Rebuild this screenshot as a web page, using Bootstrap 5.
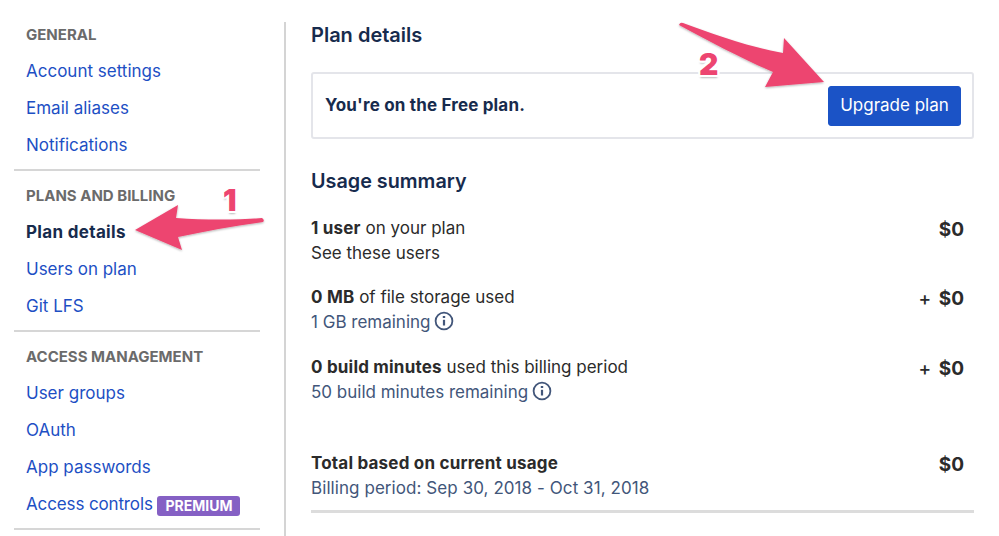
<!DOCTYPE html>
<html lang="en">
<head>
<meta charset="utf-8">
<title>Plan details</title>
<link href="https://cdn.jsdelivr.net/npm/bootstrap@5.3.0/dist/css/bootstrap.min.css" rel="stylesheet">
<style>
html,body{height:536px;overflow:hidden}
body{font-family:Inter,"Liberation Sans",sans-serif;font-size:17px;color:#172b4d;background:#fff;position:relative}
.shell{padding-top:22px}
.sidebar{width:286px;flex:none;height:514px;border-right:2px solid #d4d4d4;padding-left:14px}
.sidegroup{width:246px;border-bottom:2px solid #d6d6d6;padding:0 0 5px 12px;margin-bottom:13px}
.sidehead{font-size:15px;font-weight:700;color:#6b6b6b;line-height:24px;margin:1px 0 6px}
.sidelink{display:block;line-height:37px;height:37px;color:#1d4fc4;text-decoration:none;font-size:17px}
.sidelink.current{color:#172b4d;font-weight:700;letter-spacing:.33px}
.tightlink{letter-spacing:-.13px}
.tagpremium{background:#8560c4;color:#fff;font-size:14px;font-weight:700;border-radius:3px;padding:1px 8px;line-height:18px;display:inline-block;margin-left:0;vertical-align:-1px;letter-spacing:0}
.mainpane{padding:0 25px;flex:1;min-width:0}
.pagetitle{font-size:20px;font-weight:600;line-height:26px;margin:0 0 24px;color:#172b4d}
.planbox{height:67px;border:2px solid #e4e5ea;border-radius:3px;padding:0 11px 0 12px;font-weight:700;margin-bottom:29px;font-size:17px;letter-spacing:.17px}
.upbtn{background:#1b53c6;border:1px solid #1b53c6;color:#fff;font-size:17px;border-radius:3px;height:40px;width:133px;padding:0;letter-spacing:0}
.subtitle{font-size:19.8px;font-weight:600;line-height:26px;margin:0 0 21.8px;color:#172b4d}
.usage{color:#2b2b2b;line-height:25px;padding-right:10px;margin-bottom:19.5px}
.usage b{font-weight:700;letter-spacing:.2px}
.muted{color:#42567a}
.widetext{letter-spacing:.07px}
.price{font-size:19px;font-weight:700;color:#2b2b2b;padding-top:1px}
.price span{font-weight:500;margin-right:3px}
.totalrow{margin-top:46px;border-bottom:3px solid #dcdcdc;padding-bottom:9px}
.notes{position:absolute;left:0;top:0;pointer-events:none}
.num{position:absolute;font-size:30px;font-weight:900;color:#ed4570;line-height:30px;text-shadow:-2px 0 #fff,2px 0 #fff,0 -2px #fff,0 2px #fff,-2px -2px #fff,2px -2px #fff,-2px 2px #fff,2px 2px #fff,0 3px 2px #bbb}
.numone{left:223px;top:185px}
.numtwo{left:699px;top:49px}
.infoicon{vertical-align:-3px;margin-left:-1px}
</style>
</head>
<body>
<div class="shell d-flex">
  <nav class="sidebar">
    <div class="sidegroup">
      <div class="sidehead">GENERAL</div>
      <a class="sidelink" href="#">Account settings</a>
      <a class="sidelink" href="#">Email aliases</a>
      <a class="sidelink" href="#">Notifications</a>
    </div>
    <div class="sidegroup">
      <div class="sidehead">PLANS AND BILLING</div>
      <a class="sidelink current" href="#">Plan details</a>
      <a class="sidelink" href="#">Users on plan</a>
      <a class="sidelink" href="#">Git LFS</a>
    </div>
    <div class="sidegroup">
      <div class="sidehead">ACCESS MANAGEMENT</div>
      <a class="sidelink" href="#">User groups</a>
      <a class="sidelink" href="#">OAuth</a>
      <a class="sidelink" href="#">App passwords</a>
      <a class="sidelink tightlink" href="#">Access controls <span class="tagpremium">PREMIUM</span></a>
    </div>
  </nav>
  <main class="mainpane">
    <h1 class="pagetitle">Plan details</h1>
    <div class="planbox d-flex align-items-center justify-content-between">
      <span>You're on the Free plan.</span>
      <button class="btn upbtn" type="button">Upgrade plan</button>
    </div>
    <h2 class="subtitle">Usage summary</h2>
    <div class="usage d-flex justify-content-between">
      <div><b>1 user</b> on your plan<br>See these users</div>
      <div class="price">$0</div>
    </div>
    <div class="usage d-flex justify-content-between">
      <div><b>0 MB</b> of file storage used<br><span class="muted">1 GB remaining
        <svg class="infoicon" width="20" height="20" viewBox="0 0 20 20" fill="none" stroke="#42567a" stroke-width="1.8"><circle cx="10" cy="10" r="8.4"/><path d="M10 8.8v5.7" stroke-width="2.2"/><path d="M10 5v2" stroke-width="2.4"/></svg></span></div>
      <div class="price"><span>+</span> $0</div>
    </div>
    <div class="usage d-flex justify-content-between">
      <div><b>0 build minutes</b> used this billing period<br><span class="muted">50 build minutes remaining
        <svg class="infoicon" width="20" height="20" viewBox="0 0 20 20" fill="none" stroke="#42567a" stroke-width="1.8"><circle cx="10" cy="10" r="8.4"/><path d="M10 8.8v5.7" stroke-width="2.2"/><path d="M10 5v2" stroke-width="2.4"/></svg></span></div>
      <div class="price"><span>+</span> $0</div>
    </div>
    <div class="usage totalrow d-flex justify-content-between">
      <div><b>Total based on current usage</b><br><span class="muted widetext">Billing period: Sep 30, 2018 - Oct 31, 2018</span></div>
      <div class="price">$0</div>
    </div>
  </main>
</div>
<svg class="notes" width="999" height="536" viewBox="0 0 999 536">
  <defs><filter id="sh" x="-10%" y="-10%" width="120%" height="130%"><feDropShadow dx="0" dy="1" stdDeviation="1" flood-color="#000" flood-opacity=".3"/></filter></defs>
  <path filter="url(#sh)" fill="#ed4570" d="M135 230 L178 205 L176 218 C205 220 235 220 262 218 Q265 220 263 222 C235 226 205 231 178 237 L182 250 Z"/>
  <path filter="url(#sh)" fill="#ed4570" d="M679 25 Q680 22 683 23 C715 35 750 47 783 53 L784 38 L824 82 L765 87 L773 72 C745 60 710 42 679 25 Z"/>
</svg>
<span class="num numone">1</span>
<span class="num numtwo">2</span>
<script src="https://cdn.jsdelivr.net/npm/bootstrap@5.3.0/dist/js/bootstrap.bundle.min.js"></script>
</body>
</html>
